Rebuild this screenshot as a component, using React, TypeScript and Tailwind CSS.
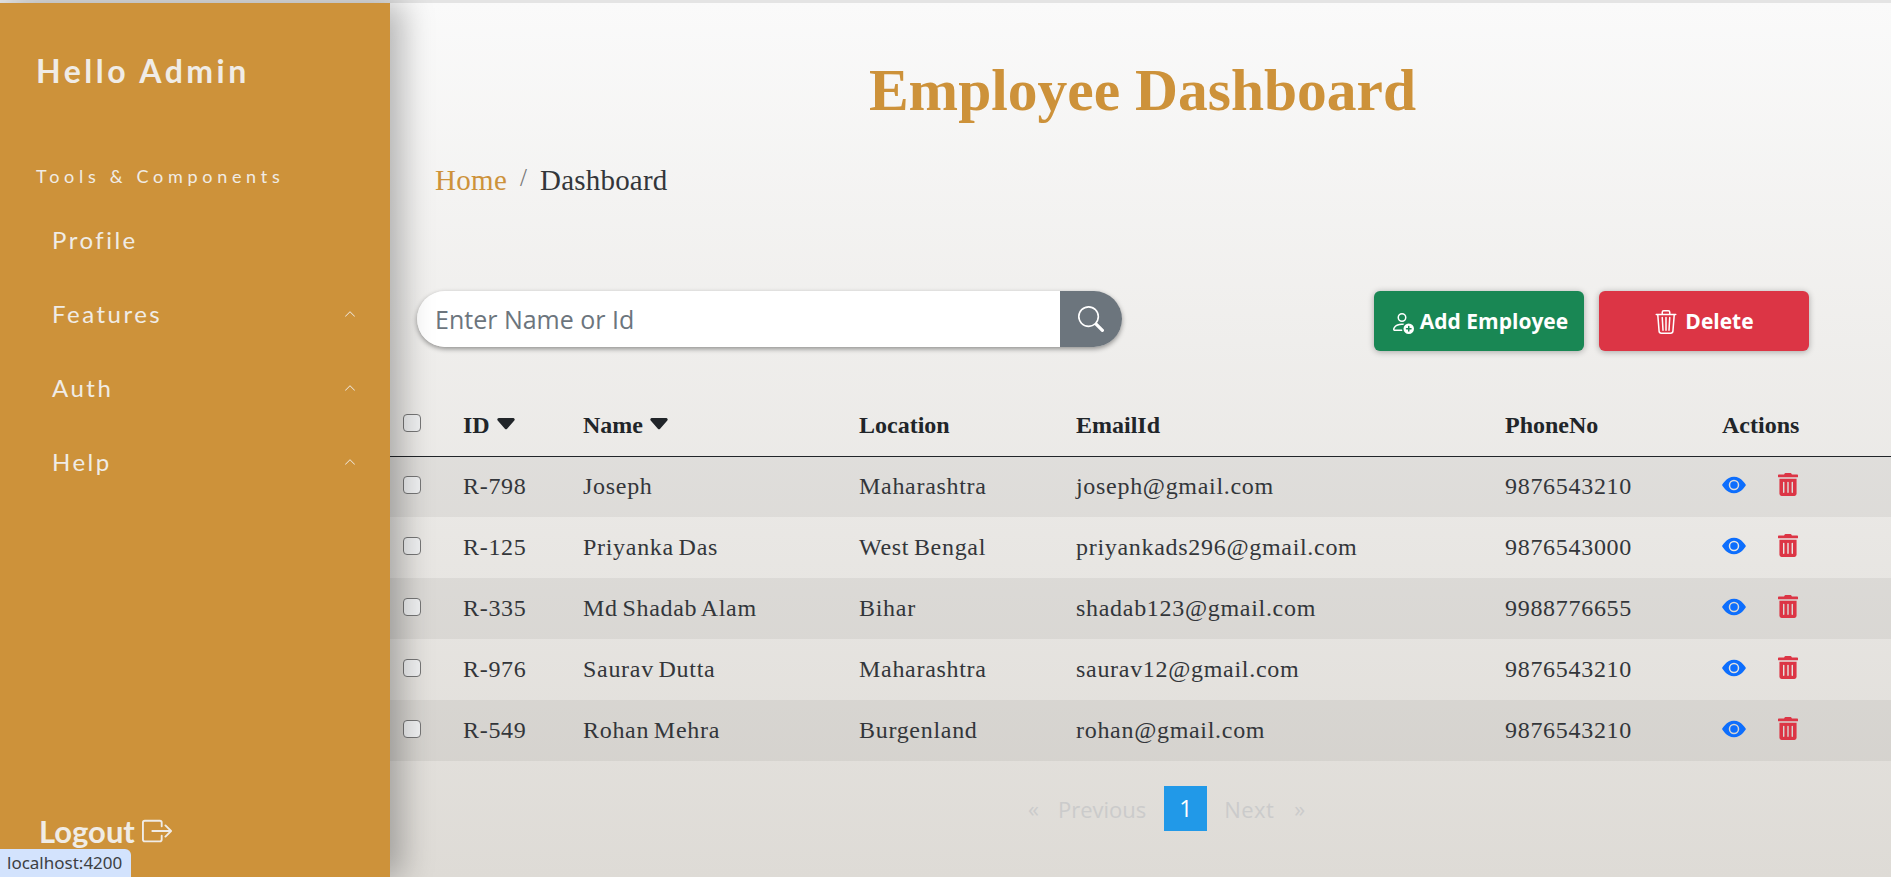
import React from "react";
import { BsBoxArrowRight, BsCaretDownFill, BsChevronUp, BsEyeFill, BsPersonAdd, BsSearch, BsTrash3 } from "react-icons/bs";
import { FaTrashAlt } from "react-icons/fa";

const employees = [
  { id: "R-798", name: "Joseph", location: "Maharashtra", email: "joseph@gmail.com", phone: "9876543210" },
  { id: "R-125", name: "Priyanka Das", location: "West Bengal", email: "priyankads296@gmail.com", phone: "9876543000" },
  { id: "R-335", name: "Md Shadab Alam", location: "Bihar", email: "shadab123@gmail.com", phone: "9988776655" },
  { id: "R-976", name: "Saurav Dutta", location: "Maharashtra", email: "saurav12@gmail.com", phone: "9876543210" },
  { id: "R-549", name: "Rohan Mehra", location: "Burgenland", email: "rohan@gmail.com", phone: "9876543210" },
];

function NavItem({ label, chevron }: { label: string; chevron?: boolean }) {
  return (
    <div className="h-[74px] flex items-center justify-between pl-[52px] pr-[34px] text-[24px] tracking-[2.5px]">
      <span>{label}</span>
      {chevron && <BsChevronUp className="w-[12px] h-[12px]" />}
    </div>
  );
}

function Checkbox() {
  return <span className="block w-[18px] h-[18px] rounded-[4px] border border-[#777] bg-[#f1f2f3]" />;
}

export default function App() {
  return (
    <div className="relative h-[877px] overflow-hidden flex flex-col bg-white">
      <div className="h-[3px] bg-[#e4e4e4]" />
      <div className="flex-1 flex min-h-0">
        {/* Sidebar */}
        <aside className="relative z-10 w-[390px] shrink-0 flex flex-col bg-[#cd923a] text-[#f0ece6] font-['Lato',sans-serif] shadow-[12px_0_30px_rgba(0,0,0,0.28)]">
          <div className="pl-9 pt-[49px] text-[32px] leading-[38px] font-bold tracking-[3.5px]">Hello Admin</div>
          <div className="pl-9 pt-[74px] text-[18px] leading-[24px] tracking-[4.7px]">Tools &amp; Components</div>
          <div className="pt-[15px]">
            <NavItem label="Profile" />
            <NavItem label="Features" chevron />
            <NavItem label="Auth" chevron />
            <NavItem label="Help" chevron />
          </div>
          <div className="mt-auto pl-[39px] pb-[28px] flex items-center gap-[7px] text-[31px] leading-9 font-bold">
            Logout <BsBoxArrowRight className="w-[30px] h-[30px]" />
          </div>
        </aside>

        {/* Main */}
        <main className="flex-1 min-w-0 flex flex-col bg-gradient-to-b from-[#fafafa] to-[#dedbd6] font-['Liberation_Serif',serif]">
          <h1 className="pt-[49px] pl-[4px] text-center text-[59.5px] leading-[76px] font-bold text-[#cd923a]">
            Employee Dashboard
          </h1>
          <div className="pl-[45px] pt-[34px] flex items-center text-[29px] leading-[36px]">
            <span className="text-[#cd923a] tracking-[0.3px]">Home</span>
            <span className="ml-[13px] mr-[13px] self-start text-[25px] leading-[32px] text-[#777]">/</span>
            <span className="text-[#33363a] tracking-[0.2px]">Dashboard</span>
          </div>

          <div className="pt-[93px] pl-[27px] pr-[82px] flex items-start justify-between">
            <div className="w-[705px] h-[56px] flex rounded-[28px] overflow-hidden shadow-[0_2px_5px_rgba(0,0,0,0.4)] font-['Open_Sans',sans-serif]">
              <div className="flex-1 bg-white pl-[18px] pt-[2px] flex items-center text-[25px] text-[#6c757d]">Enter Name or Id</div>
              <div className="w-[62px] bg-[#6c757d] flex items-center justify-center text-white">
                <BsSearch className="w-[26px] h-[26px]" />
              </div>
            </div>
            <div className="flex gap-[15px] font-['Open_Sans',sans-serif] text-[21px] font-bold text-white">
              <div className="w-[210px] h-[60px] pt-[2px] rounded-[6px] bg-[#198754] flex items-center justify-center gap-[6px] shadow-[0_1px_6px_rgba(0,0,0,0.3)]">
                <BsPersonAdd className="w-[24px] h-[24px]" /> Add Employee
              </div>
              <div className="w-[210px] h-[60px] pt-[2px] rounded-[6px] bg-[#dc3545] flex items-center justify-center gap-[7px] shadow-[0_1px_6px_rgba(0,0,0,0.3)]">
                <BsTrash3 className="w-[24px] h-[24px]" /> Delete
              </div>
            </div>
          </div>

          <table className="mt-[44px] w-full table-fixed text-[24px] tracking-[0.7px] [word-spacing:-2px] text-[#33363a]">
            <thead className="tracking-normal text-[#212529]">
              <tr className="h-[61px] border-b border-[#212529] text-left">
                <th className="w-[73px] pl-[13px] pb-[4px] font-bold"><Checkbox /></th>
                <th className="w-[120px] font-bold"><span className="inline-flex items-center gap-[4px]">ID <BsCaretDownFill className="w-[24px] h-[24px] mb-[2px]" /></span></th>
                <th className="w-[276px] font-bold"><span className="inline-flex items-center gap-[4px]">Name <BsCaretDownFill className="w-[24px] h-[24px] mb-[2px]" /></span></th>
                <th className="w-[217px] font-bold">Location</th>
                <th className="w-[429px] font-bold">EmailId</th>
                <th className="w-[217px] font-bold">PhoneNo</th>
                <th className="font-bold">Actions</th>
              </tr>
            </thead>
            <tbody>
              {employees.map((e) => (
                <tr key={e.id} className="h-[61px] odd:bg-[rgba(0,0,0,0.05)]">
                  <td className="pl-[13px] pb-[4px]"><Checkbox /></td>
                  <td className="pb-[2px]">{e.id}</td>
                  <td className="pb-[2px]">{e.name}</td>
                  <td className="pb-[2px]">{e.location}</td>
                  <td className="pb-[2px]">{e.email}</td>
                  <td className="pb-[2px]">{e.phone}</td>
                  <td className="pb-[4px]">
                    <div className="flex items-center gap-[32px]">
                      <BsEyeFill className="w-[24px] h-[24px] text-[#0d6efd]" />
                      <FaTrashAlt className="w-[20px] h-[23px] text-[#dc3545]" />
                    </div>
                  </td>
                </tr>
              ))}
            </tbody>
          </table>

          <div className="pt-[25px] pl-[638px] flex items-center font-['Open_Sans',sans-serif] text-[22px] text-[#cbcbcb]">
            <span>«</span>
            <span className="ml-[19px] pt-[1px]">Previous</span>
            <span className="ml-[18px] w-[43px] h-[45px] flex items-center justify-center bg-[#2199e8] text-white text-[23px] font-medium">1</span>
            <span className="ml-[17px] pt-[1px] tracking-[0.4px]">Next</span>
            <span className="ml-[20px]">»</span>
          </div>
        </main>
      </div>

      {/* Browser link preview */}
      <div className="absolute left-0 bottom-0 h-[28px] w-[131px] rounded-tr-[6px] bg-[#d3e3fd] pl-[7px] flex items-center font-['Noto_Sans',sans-serif] text-[17px] text-[#3c4043] z-20">
        localhost:4200
      </div>
    </div>
  );
}
